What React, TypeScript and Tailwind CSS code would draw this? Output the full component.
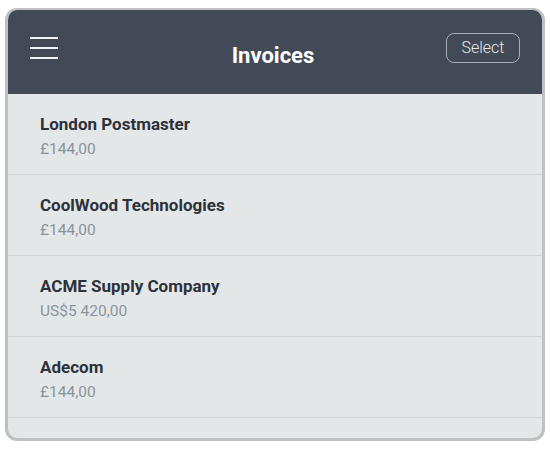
import React from "react";

const items = [
  { name: "London Postmaster", price: "£144,00" },
  { name: "CoolWood Technologies", price: "£144,00" },
  { name: "ACME Supply Company", price: "US$5 420,00" },
  { name: "Adecom", price: "£144,00" },
];

export default function App() {
  return (
    <div className="w-[550px] h-[450px] bg-white pt-[8px] pl-[5px]" style={{ fontFamily: "Roboto, 'Liberation Sans', sans-serif" }}>
      <div className="w-[540px] h-[433px] rounded-[12px] border-[3px] border-t-[2px] border-[#bfc0c2] bg-[#e4e7e8] overflow-hidden flex flex-col">
        <div className="h-[84px] shrink-0 bg-[#414a56] grid grid-cols-[1fr_auto_1fr] items-start px-[22px]">
          <div className="mt-[27px] flex flex-col gap-[8px] w-[28px]">
            <div className="h-[2px] bg-[#f2f3f4]" />
            <div className="h-[2px] bg-[#f2f3f4]" />
            <div className="h-[2px] bg-[#f2f3f4]" />
          </div>
          <div className="mt-[32px] mr-[4px] text-[22px] leading-[28px] font-bold text-white">Invoices</div>
          <div className="flex justify-end">
            <button className="mt-[23px] w-[74px] h-[30px] rounded-[8px] border border-[#a9aeb4] text-[16px] leading-none text-[#e8e9ea] font-light">
              Select
            </button>
          </div>
        </div>
        <div className="flex flex-col">
          {items.map((it) => (
            <div key={it.name} className="h-[81px] border-b border-[#cfd4d6] pl-[32px] pt-[20px]">
              <div className="text-[17px] leading-[20px] font-bold text-[#2c323a]">{it.name}</div>
              <div className="mt-[5px] text-[15.5px] leading-[20px] text-[#8b949c]">{it.price}</div>
            </div>
          ))}
        </div>
      </div>
    </div>
  );
}
